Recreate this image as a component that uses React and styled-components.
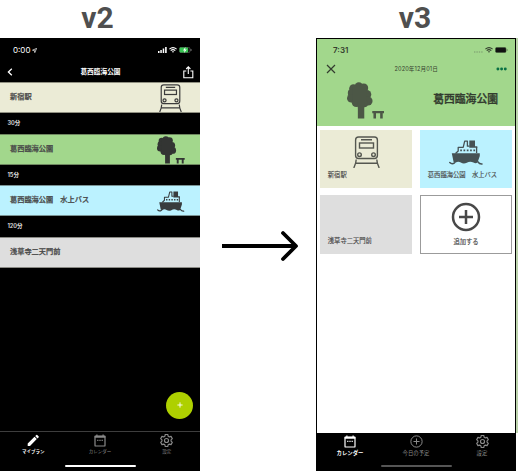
import React from "react";
import styled, { createGlobalStyle } from "styled-components";

const GlobalStyle = createGlobalStyle`
  * { box-sizing: border-box; }
  html, body { margin: 0; padding: 0; background: #fff; overflow: hidden; }
  body { font-family: Inter, "Noto Sans CJK JP", sans-serif; }
  svg { display: block; flex: none; }
`;

const Page = styled.main`
  display: grid;
  grid-template-columns: 200px 116px 202px;
  width: 518px;
  height: 471px;
  background: #fff;
`;
const Version = styled.section`
  display: flex;
  flex-direction: column;
`;
const VersionTitle = styled.h2`
  margin: 0;
  height: 38px;
  padding: 0 ${(p) => p.$right}px 0 ${(p) => p.$left}px;
  font: 700 30px/35px Roboto, sans-serif;
  color: #4f4f4f;
  text-align: center;
`;
const ArrowCell = styled.div`
  padding: 229px 0 0 22px;
`;

const DarkPhone = styled.div`
  display: flex;
  flex-direction: column;
  height: 433px;
  background: #000;
  color: #fff;
`;
const StatusBar = styled.div`
  display: flex;
  align-items: center;
  justify-content: space-between;
  height: ${(p) => p.$height}px;
  padding: ${(p) => p.$pad};
`;
const Clock = styled.span`
  display: flex;
  align-items: center;
  gap: 2px;
  font-size: 8px;
  line-height: 10px;
  font-weight: ${(p) => p.$weight};
`;
const StatusIcons = styled.span`
  display: flex;
  align-items: center;
  gap: 2px;
`;
const NavBar = styled.header`
  display: grid;
  grid-template-columns: 40px 1fr 40px;
  align-items: center;
  height: ${(p) => p.$height}px;
  padding: ${(p) => p.$pad};
  svg:last-child { justify-self: end; }
`;
const NavTitle = styled.h1`
  margin: 0;
  text-align: center;
  white-space: nowrap;
  font-size: ${(p) => p.$size}px;
  line-height: 10px;
  font-weight: ${(p) => p.$weight};
  letter-spacing: ${(p) => p.$spacing || 0}px;
`;
const Stop = styled.div`
  display: flex;
  justify-content: space-between;
  height: 31px;
  padding-left: 10px;
  padding-right: ${(p) => p.$right || 0}px;
  border: solid rgba(70, 70, 60, 0.55);
  border-width: 1px 0;
  background: ${(p) => p.$color};
  color: #484848;
  overflow: hidden;
`;
const StopName = styled.span`
  font-size: 7.2px;
  line-height: 27px;
  font-weight: 500;
  -webkit-text-stroke: 0.25px currentColor;
  white-space: pre;
`;
const Duration = styled.div`
  height: ${(p) => p.$height}px;
  padding-left: 7.5px;
  font-size: 5.6px;
  line-height: 20px;
  font-weight: 600;
  color: #e2e2e2;
`;
const FabRow = styled.div`
  flex: 1;
  display: flex;
  align-items: flex-end;
  justify-content: flex-end;
  padding: 0 7px 12px 0;
`;
const Fab = styled.div`
  width: 27px;
  height: 27px;
  border-radius: 50%;
  background: #aed000;
  display: grid;
  place-items: center;
`;
const TabBar = styled.nav`
  display: grid;
  grid-template-columns: repeat(3, 1fr);
  height: ${(p) => p.$height}px;
  padding-top: ${(p) => p.$top}px;
  border-top: ${(p) => (p.$line ? "1px solid #3d3d3d" : "0")};
  background: #000;
`;
const Tab = styled.div`
  display: flex;
  flex-direction: column;
  align-items: center;
  color: ${(p) => (p.$active ? "#fff" : "#8a8a8a")};
`;
const TabLabel = styled.span`
  margin-top: ${(p) => p.$gap}px;
  font-size: ${(p) => p.$size}px;
  line-height: 8px;
  font-weight: ${(p) => (p.$active ? 700 : 400)};
  white-space: nowrap;
`;
const HomeBar = styled.div`
  width: 71px;
  height: ${(p) => p.$thick}px;
  margin: 0 auto ${(p) => p.$bottom}px;
  border-radius: 2px;
  background: ${(p) => p.$color};
`;

const PhoneEdge = styled.div`
  width: 202px;
  height: 433px;
  padding-right: 2px;
  background: linear-gradient(#bdd4ad 395px, #fff 395px);
`;
const LightPhone = styled.div`
  display: flex;
  flex-direction: column;
  width: 200px;
  height: 433px;
  border: 1px solid #000;
  border-bottom: 0;
  background: #fff;
  color: #35402f;
`;
const Hero = styled.div`
  height: 87px;
  background: #a2d78c;
`;
const HeroBody = styled.div`
  display: flex;
  justify-content: space-between;
  padding: 0 17px 0 29.5px;
`;
const HeroTitle = styled.h1`
  margin: 0;
  padding-top: 12px;
  font-size: 10.8px;
  line-height: 16px;
  font-weight: 500;
  -webkit-text-stroke: 0.35px currentColor;
  color: #333c2f;
`;
const CardGrid = styled.div`
  flex: 1;
  display: grid;
  grid-template-columns: 92px 92px;
  grid-template-rows: 58px 59px;
  gap: 7px 8px;
  padding: 4px 3px 0;
  align-content: start;
`;
const Card = styled.div`
  display: flex;
  flex-direction: column;
  align-items: center;
  justify-content: space-between;
  padding: ${(p) => p.$top || 0}px 0 ${(p) => (p.$outlined ? 6.5 : 8)}px;
  background: ${(p) => p.$color};
  border: ${(p) => (p.$outlined ? "1px solid #9b9b9b" : "0")};
`;
const CardLabel = styled.span`
  margin-top: auto;
  align-self: ${(p) => (p.$center ? "center" : "flex-start")};
  padding-left: ${(p) => (p.$center ? 0 : 7.8)}px;
  font-size: 6.3px;
  line-height: 10px;
  color: #484848;
  -webkit-text-stroke: 0.12px currentColor;
  white-space: pre;
`;
const LightFooter = styled.footer`
  height: 38px;
  background: #000;
`;

const Train = ({ w, h, color }) => (
  <svg width={w} height={h} viewBox="0 0 27 32" fill="none" stroke={color} strokeWidth="1.4" preserveAspectRatio="none">
    <rect x="2.6" y="1" width="21.8" height="21.5" rx="3" />
    <path d="M8 3.8H19M3.2 23.5C3.2 27 2 29.5 .8 32M23.8 23.5C23.8 27 25 29.5 26.2 32M3 27.3H24" />
    <rect x="6.5" y="7" width="14" height="5" />
    <circle cx="6.5" cy="18.7" r="1.8" />
    <circle cx="20.5" cy="18.7" r="1.8" />
  </svg>
);

const Tree = ({ w, h, color }) => (
  <svg width={w} height={h} viewBox="0 0 38 37" fill={color} preserveAspectRatio="none">
    <circle cx="12" cy="4.5" r="4.3" />
    <circle cx="6.5" cy="6.5" r="4.3" />
    <circle cx="17" cy="6" r="4.5" />
    <circle cx="4.8" cy="11" r="4" />
    <circle cx="4.3" cy="16.3" r="4.3" />
    <circle cx="9.5" cy="20.3" r="4.8" />
    <circle cx="20" cy="12.5" r="4.6" />
    <circle cx="21.3" cy="19" r="4.6" />
    <circle cx="17.5" cy="21.5" r="3.8" />
    <path d="M6 5H20V20H6ZM10.5 19H18L17.5 26V36.5H11V27Z" />
    <path d="M25.6 29H37.6V31.3H36.2V36.5H33.6V31.3H29.4V36.5H26.8V31.3H25.6Z" />
  </svg>
);

const Ship = ({ w, h, color, bg }) => (
  <svg width={w} height={h} viewBox="0 0 34 25" fill={color} preserveAspectRatio="none">
    <path d="M9.2 14V7.5H14.3L15.8 1.2H18.4V6.2H20.5V7.5H27.6V14Z" fill={bg} />
    <path d="M6.5 13.5L9.2 11V7.4H14.2L15.7 1.2H18.4V6.2H20.5M27.6 13V7" fill="none" stroke={color} strokeWidth="1.3" strokeLinejoin="round" />
    <path d="M20.3 .6H26V6.3H28.3V7.8H20.3Z" />
    <path d="M11.2 9.6H12.9V11.3H11.2ZM14.5 9.6H16.2V11.3H14.5ZM17.8 9.6H19.5V11.3H17.8ZM21.1 9.6H22.8V11.3H21.1ZM24.4 9.6H26.1V11.3H24.4Z" />
    <path d="M2.8 13.3H30.8V16L28.6 22.2Q27 24 24.5 22.6Q21 21 17.8 22.8Q14.5 24.3 11.8 22.5Q9 21 6.5 22.8L4.6 22Z" />
    <path d="M.8 22.5Q3 24.8 5.5 22.8M28.8 21.8Q30.5 24.2 33 24" fill="none" stroke={color} strokeWidth="1.5" strokeLinecap="round" />
  </svg>
);

const Calendar = () => (
  <svg width="12" height="13" viewBox="0 0 12 13" fill="none" stroke="currentColor">
    <rect x="1" y="2" width="10" height="10" rx=".6" strokeWidth="1.2" />
    <path d="M.7 2.8H11.3" strokeWidth="1.9" />
    <path d="M2.9 .5V2M9.1 .5V2" strokeWidth="1.2" />
    <path d="M3.2 6.4H4.4M5.4 6.4H6.6M7.6 6.4H8.8" strokeWidth="1.2" />
  </svg>
);
const Pencil = () => (
  <svg width="12" height="13" viewBox="0 0 12 13" fill="currentColor">
    <path d="M.7 9.6L7.5 2.8L9.8 5.1L3 11.9H.7ZM8.2 2.1L9.4.9Q9.8.6 10.2.9L11.7 2.4Q12 2.8 11.7 3.2L10.5 4.4Z" />
  </svg>
);
const Gear = () => (
  <svg width="13" height="13" viewBox="2 2 20 20" fill="none" stroke="currentColor" strokeWidth="1.8" strokeLinejoin="round">
    <path d="M10 2.8H14L14.6 5.5L16.4 6.5L19 5.7L21 9.2L19 11V13L21 14.8L19 18.3L16.4 17.5L14.6 18.5L14 21.2H10L9.4 18.5L7.6 17.5L5 18.3L3 14.8L5 13V11L3 9.2L5 5.7L7.6 6.5L9.4 5.5Z" />
    <circle cx="12" cy="12" r="3.1" />
  </svg>
);
const PlusCircle = ({ size, stroke, color = "currentColor" }) => (
  <svg width={size} height={size} viewBox="0 0 30 30" fill="none" stroke={color} strokeWidth={stroke}>
    <circle cx="15" cy="15" r="13" />
    <path d="M15 8V22M8 15H22" />
  </svg>
);
const Wifi = () => (
  <svg width="8" height="6" viewBox="0 0 8 6" fill="none" stroke="currentColor" strokeWidth="1.15">
    <path d="M.4 2.1Q4-.9 7.6 2.1M1.7 3.6Q4 1.8 6.3 3.6" />
    <path d="M2.8 4.6Q4 3.7 5.2 4.6L4 5.8Z" fill="currentColor" stroke="none" />
  </svg>
);

const stops = [
  { name: "新宿駅", color: "#ebebd6", right: 18, icon: <Train w={23} h={28} color="#3c3c3c" />, iconTop: 1.2, time: "30分", gap: 21 },
  { name: "葛西臨海公園", color: "#a2d78c", right: 15.5, icon: <Tree w={28} h={28} color="#333533" />, iconTop: 1.2, time: "15分", gap: 20 },
  { name: "葛西臨海公園　水上バス", color: "#bbf2ff", right: 15.5, icon: <Ship w={27.5} h={21} color="#383c3e" bg="#bbf2ff" />, iconTop: 5, time: "120分", gap: 21 },
  { name: "浅草寺二天門前", color: "#dedede" },
];
const IconSlot = styled.span`
  padding-top: ${(p) => p.$top}px;
`;

export default function App() {
  return (
    <>
      <GlobalStyle />
      <Page>
        <Version>
          <VersionTitle $left={0} $right={5}>v2</VersionTitle>
          <DarkPhone>
            <StatusBar $height={23} $pad="1px 8px 0 13px">
              <Clock $weight={400}>
                0:00
                <svg width="5" height="5" viewBox="0 0 5 5" fill="none" stroke="currentColor" strokeWidth=".7">
                  <path d="M.5 2.2L4.6.4L2.8 4.6L2.4 2.5Z" />
                </svg>
              </Clock>
              <StatusIcons>
                <svg width="9" height="6" viewBox="0 0 9 6" fill="currentColor">
                  <path d="M0 4H1.5V6H0ZM2.3 3H3.8V6H2.3ZM4.7 1.6H6.2V6H4.7ZM7.1 0H8.7V6H7.1Z" />
                </svg>
                <Wifi />
                <svg width="13" height="6" viewBox="0 0 13 6">
                  <rect x=".4" y=".4" width="10.6" height="5.2" rx="1.5" fill="none" stroke="#777" strokeWidth=".6" />
                  <rect x=".6" y=".6" width="8.6" height="4.8" rx=".8" fill="#38c653" />
                  <path d="M6.5 0L4 3.4H5.6L5 6L7.8 2.5H6.1Z" fill="#fff" />
                  <path d="M12 2V4" stroke="#777" />
                </svg>
              </StatusIcons>
            </StatusBar>
            <NavBar $height={21} $pad="1px 6px 0 7px">
              <svg width="6" height="8" viewBox="0 0 6 8" fill="none" stroke="currentColor" strokeWidth="1.3">
                <path d="M4.8 .8L1.4 4L4.8 7.2" />
              </svg>
              <NavTitle $size={6.7} $weight={700}>葛西臨海公園</NavTitle>
              <svg width="12" height="13" viewBox="0 0 12 13" fill="none" stroke="currentColor" strokeWidth="1.1">
                <path d="M4.3 5H1.8V11.7H10.8V5H8.4M6.3 8V1M4.2 3L6.3 .9L8.4 3" />
              </svg>
            </NavBar>
            {stops.map((s) => (
              <React.Fragment key={s.name}>
                <Stop $color={s.color} $right={s.right}>
                  <StopName>{s.name}</StopName>
                  {s.icon && <IconSlot $top={s.iconTop}>{s.icon}</IconSlot>}
                </Stop>
                {s.time && <Duration $height={s.gap}>{s.time}</Duration>}
              </React.Fragment>
            ))}
            <FabRow>
              <Fab>
                <svg width="6" height="6" viewBox="0 0 6 6" stroke="#fff" strokeWidth=".9">
                  <path d="M3 .4V5.6M.4 3H5.6" />
                </svg>
              </Fab>
            </FabRow>
            <TabBar $height={34} $top={2} $line>
              <Tab $active>
                <Pencil />
                <TabLabel $gap={1} $size={4.5} $active>マイプラン</TabLabel>
              </Tab>
              <Tab>
                <Calendar />
                <TabLabel $gap={1} $size={4.5}>カレンダー</TabLabel>
              </Tab>
              <Tab>
                <Gear />
                <TabLabel $gap={1} $size={4.5}>設定</TabLabel>
              </Tab>
            </TabBar>
            <HomeBar $color="#fff" $thick={2.5} $bottom={4} />
          </DarkPhone>
        </Version>

        <ArrowCell>
          <svg width="80" height="34" viewBox="0 0 80 34" fill="none" stroke="#000" strokeWidth="3.8">
            <path d="M0 17H74" />
            <path d="M61 4L74 17L61 30" strokeLinecap="round" strokeLinejoin="round" />
          </svg>
        </ArrowCell>

        <Version>
          <VersionTitle $left={0} $right={4}>v3</VersionTitle>
          <PhoneEdge>
            <LightPhone>
              <Hero>
                <StatusBar $height={22} $pad="0 7px 0 16px">
                  <Clock $weight={600}>7:31</Clock>
                  <StatusIcons>
                    <svg width="9" height="6" viewBox="0 0 9 6" fill="#78966d">
                      <path d="M0 4.5H1.4V5.5H0ZM2.4 4.5H3.8V5.5H2.4ZM4.8 4.5H6.2V5.5H4.8ZM7.2 4.5H8.6V5.5H7.2Z" />
                    </svg>
                    <Wifi />
                    <svg width="13" height="6" viewBox="0 0 13 6">
                      <rect x=".5" y=".5" width="10.5" height="5" rx="1.2" fill="#111" stroke="#3d5036" strokeWidth=".5" />
                      <path d="M12 2V4" stroke="#66845b" />
                    </svg>
                  </StatusIcons>
                </StatusBar>
                <NavBar $height={19} $pad="0 8.5px 4px 9px">
                  <svg width="10" height="10" viewBox="0 0 10 10" stroke="#333c2f" strokeWidth="1.2">
                    <path d="M1 1L9 9M9 1L1 9" />
                  </svg>
                  <NavTitle $size={5.6} $weight={400} $spacing={0.12}>2020年12月01日</NavTitle>
                  <svg width="11" height="4" viewBox="0 0 11 4" fill="#087044">
                    <circle cx="1.9" cy="2" r="1.45" />
                    <circle cx="5.6" cy="2" r="1.45" />
                    <circle cx="9.3" cy="2" r="1.45" />
                  </svg>
                </NavBar>
                <HeroBody>
                  <IconSlot $top={1.8}>
                    <Tree w={37.5} h={37} color="#4c5746" />
                  </IconSlot>
                  <HeroTitle>葛西臨海公園</HeroTitle>
                </HeroBody>
              </Hero>
              <CardGrid>
                <Card $color="#ebebd6" $top={5.5}>
                  <Train w={27} h={32} color="#555750" />
                  <CardLabel>新宿駅</CardLabel>
                </Card>
                <Card $color="#bbf2ff" $top={9.5}>
                  <Ship w={34} h={25} color="#465255" bg="#bbf2ff" />
                  <CardLabel>葛西臨海公園　水上バス</CardLabel>
                </Card>
                <Card $color="#dedede">
                  <CardLabel>浅草寺二天門前</CardLabel>
                </Card>
                <Card $color="#fff" $outlined $top={5.5}>
                  <PlusCircle size={30} stroke={2.5} color="#484848" />
                  <CardLabel $center>追加する</CardLabel>
                </Card>
              </CardGrid>
              <LightFooter>
                <TabBar $height={32} $top={2}>
                  <Tab $active>
                    <Calendar />
                    <TabLabel $gap={1} $size={5.4} $active>カレンダー</TabLabel>
                  </Tab>
                  <Tab>
                    <PlusCircle size={13} stroke={2.3} />
                    <TabLabel $gap={1} $size={5.4}>今日の予定</TabLabel>
                  </Tab>
                  <Tab>
                    <Gear />
                    <TabLabel $gap={1} $size={5.4}>設定</TabLabel>
                  </Tab>
                </TabBar>
                <HomeBar $color="#555" $thick={1.5} $bottom={4} />
              </LightFooter>
            </LightPhone>
          </PhoneEdge>
        </Version>
      </Page>
    </>
  );
}
